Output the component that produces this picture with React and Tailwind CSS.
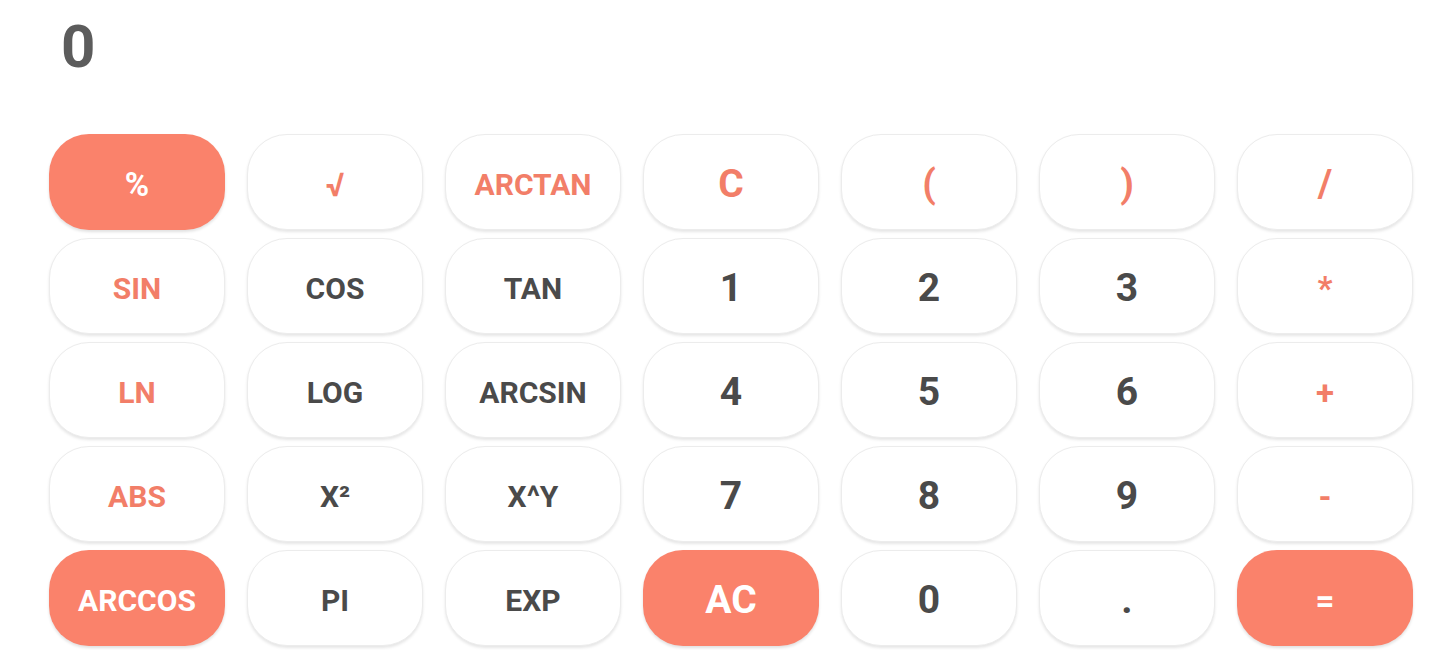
import React from 'react';

const keys = [
  { label: '%', kind: 'fill', size: 'op' },
  { label: '√', kind: 'accent', size: 'op' },
  { label: 'ARCTAN', kind: 'accent' },
  { label: 'C', kind: 'accent', size: 'big' },
  { label: '(', kind: 'accent', size: 'big' },
  { label: ')', kind: 'accent', size: 'big' },
  { label: '/', kind: 'accent', size: 'big' },

  { label: 'SIN', kind: 'accent' },
  { label: 'COS', kind: 'plain' },
  { label: 'TAN', kind: 'plain' },
  { label: '1', kind: 'plain', size: 'big' },
  { label: '2', kind: 'plain', size: 'big' },
  { label: '3', kind: 'plain', size: 'big' },
  { label: '*', kind: 'accent', size: 'op' },

  { label: 'LN', kind: 'accent' },
  { label: 'LOG', kind: 'plain' },
  { label: 'ARCSIN', kind: 'plain' },
  { label: '4', kind: 'plain', size: 'big' },
  { label: '5', kind: 'plain', size: 'big' },
  { label: '6', kind: 'plain', size: 'big' },
  { label: '+', kind: 'accent', size: 'op' },

  { label: 'ABS', kind: 'accent' },
  { label: 'X²', kind: 'plain' },
  { label: 'X^Y', kind: 'plain' },
  { label: '7', kind: 'plain', size: 'big' },
  { label: '8', kind: 'plain', size: 'big' },
  { label: '9', kind: 'plain', size: 'big' },
  { label: '-', kind: 'accent', size: 'op' },

  { label: 'ARCCOS', kind: 'fill' },
  { label: 'PI', kind: 'plain' },
  { label: 'EXP', kind: 'plain' },
  { label: 'AC', kind: 'fill', size: 'big' },
  { label: '0', kind: 'plain', size: 'big' },
  { label: '.', kind: 'plain', size: 'big' },
  { label: '=', kind: 'fill', size: 'op' },
];

function Key({ label, kind, size }) {
  const base =
    'h-[96px] rounded-[40px] flex items-center justify-center pt-[5px] font-bold select-none';
  const tone =
    kind === 'fill'
      ? 'bg-[#fa826b] text-white shadow-[0_2px_3px_rgba(0,0,0,0.12)]'
      : kind === 'accent'
      ? 'bg-white text-[#f27e68] border border-[#ececec] shadow-[0_2px_3px_rgba(0,0,0,0.10)]'
      : 'bg-white text-[#4a4a4a] border border-[#ececec] shadow-[0_2px_3px_rgba(0,0,0,0.10)]';
  const text =
    size === 'big' ? 'text-[39px]' : size === 'op' ? 'text-[33px]' : 'text-[30px]';

  return (
    <button className={`${base} ${tone} ${text}`}>
      <span className="leading-none">{label}</span>
    </button>
  );
}

export default function App() {
  return (
    <div className="w-[1446px] h-[650px] bg-white overflow-hidden font-['Roboto',sans-serif]">
      {/* Display */}
      <div className="h-[134px] pl-[61px] pt-[17px]">
        <span className="text-[60px] font-bold text-[#5c5c5c] leading-none">0</span>
      </div>

      {/* Keypad */}
      <div className="ml-[49px] grid grid-cols-[repeat(7,176px)] gap-x-[22px] gap-y-[8px]">
        {keys.map((k, i) => (
          <Key key={i} {...k} />
        ))}
      </div>
    </div>
  );
}
